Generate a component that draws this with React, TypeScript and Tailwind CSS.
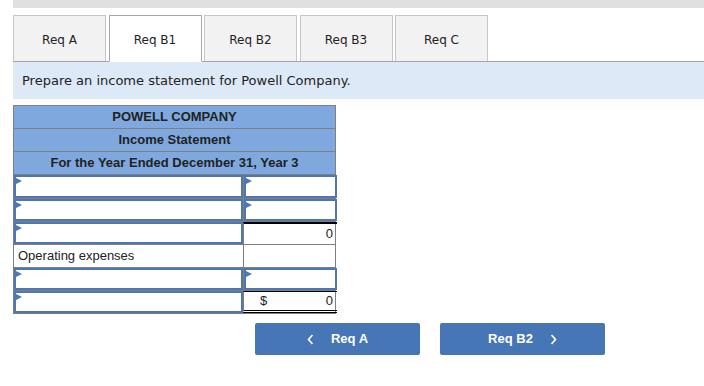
import { ReactNode } from 'react';

const tabs = ['Req A', 'Req B1', 'Req B2', 'Req B3', 'Req C'];
const active = 'Req B1';

function Marker() {
  return (
    <span className="absolute left-0 top-[1px] w-0 h-0 border-t-[3px] border-b-[3px] border-l-[6px] border-t-transparent border-b-transparent border-l-[#4a78b8]" />
  );
}

function InputBox() {
  return (
    <div className="relative h-full w-full border-2 border-[#4e77b1] bg-white">
      <Marker />
    </div>
  );
}

function Cell({ width, children, className = '' }: { width: string; children?: ReactNode; className?: string }) {
  return <div className={`h-full shrink-0 ${width} ${className}`}>{children}</div>;
}

export default function App() {
  const font = { fontFamily: "'DejaVu Sans', Verdana, sans-serif" };
  const arial = { fontFamily: "'Liberation Sans', Arial, sans-serif" };

  return (
    <div className="w-[704px] h-[386px] bg-white overflow-hidden">
      {/* top strip */}
      <div className="ml-[13px] h-[8px] bg-[#e0e0e0]" />

      {/* Tabs */}
      <div className="mt-[7px] ml-[13px] flex items-start gap-[2.5px] border-b border-[#a6a6a6]" style={font}>
        {tabs.map((t) => (
          <div
            key={t}
            className={`w-[93px] pt-[2px] flex items-center justify-center text-[12px] text-[#222] border ${
              t === active ? 'h-[47px] -mb-px pb-px bg-white border-[#a6a6a6] border-b-white' : 'h-[46px] bg-[#f2f2f2] border-[#c6c6c6] border-b-0'
            }`}
          >
            <span className={t === active ? 'translate-y-[1px]' : ''}>{t}</span>
          </div>
        ))}
      </div>

      {/* Instruction */}
      <div className="ml-[13px] h-[37px] bg-[#dde9f6] flex items-center pl-[9px] text-[13px] text-[#222]" style={font}>
        Prepare an income statement for Powell Company.
      </div>

      {/* Statement */}
      <div className="mt-[6px] ml-[13px] w-[323px] border border-[#7f7f7f]" style={arial}>
        {['POWELL COMPANY', 'Income Statement', 'For the Year Ended December 31, Year 3'].map((h) => (
          <div
            key={h}
            className="h-[23px] bg-[#7fa9de] border-b border-[#7f7f7f] flex items-center justify-center text-[13px] font-bold text-[#222]"
          >
            {h}
          </div>
        ))}

        {/* row 1 */}
        <div className="h-[23px] flex">
          <Cell width="w-[229px]"><InputBox /></Cell>
          <Cell width="w-[94px]" className="border-l border-[#7f7f7f]"><InputBox /></Cell>
        </div>
        {/* row 2 */}
        <div className="h-[23px] flex border-t border-[#7f7f7f]">
          <Cell width="w-[229px]"><InputBox /></Cell>
          <Cell width="w-[94px]" className="border-l border-[#7f7f7f]"><InputBox /></Cell>
        </div>
        {/* row 3 */}
        <div className="h-[23px] flex border-t border-[#7f7f7f]">
          <Cell width="w-[229px]"><InputBox /></Cell>
          <Cell width="w-[94px]" className="border-l border-[#7f7f7f] border-t-2 border-t-black flex items-center justify-end pr-[4px] text-[13px] text-[#222]">
            0
          </Cell>
        </div>
        {/* row 4 */}
        <div className="h-[23px] flex border-t border-[#7f7f7f]">
          <Cell width="w-[229px]" className="flex items-center pl-[4px] text-[13px] text-[#222]">
            Operating expenses
          </Cell>
          <Cell width="w-[94px]" className="border-l border-[#7f7f7f]" />
        </div>
        {/* row 5 */}
        <div className="h-[23px] flex border-t border-[#7f7f7f]">
          <Cell width="w-[229px]"><InputBox /></Cell>
          <Cell width="w-[94px]" className="border-l border-[#7f7f7f]"><InputBox /></Cell>
        </div>
        {/* row 6 */}
        <div className="h-[23px] flex border-t border-[#7f7f7f]">
          <Cell width="w-[229px]"><InputBox /></Cell>
          <Cell width="w-[94px]" className="border-l border-[#7f7f7f] border-t border-t-black border-b-[3px] border-b-black border-double flex items-center justify-between pl-[16px] pr-[4px] text-[13px] text-[#222]">
            <span>$</span>
            <span>0</span>
          </Cell>
        </div>
      </div>

      {/* Nav buttons */}
      <div className="mt-[9px] ml-[255px] flex gap-[20px]" style={arial}>
        <button className="w-[165px] h-[32px] rounded-[2px] bg-[#4676b5] text-white text-[13px] font-bold flex items-center justify-center gap-[17px]">
          <svg width="7" height="11" viewBox="0 0 7 11" fill="none" stroke="white" strokeWidth="1.6">
            <path d="M5.5 1 L1.5 5.5 L5.5 10" />
          </svg>
          <span>Req A</span>
        </button>
        <button className="w-[165px] h-[32px] rounded-[2px] bg-[#4676b5] text-white text-[13px] font-bold flex items-center justify-center gap-[17px]">
          <span>Req B2</span>
          <svg width="7" height="11" viewBox="0 0 7 11" fill="none" stroke="white" strokeWidth="1.6">
            <path d="M1.5 1 L5.5 5.5 L1.5 10" />
          </svg>
        </button>
      </div>
    </div>
  );
}
